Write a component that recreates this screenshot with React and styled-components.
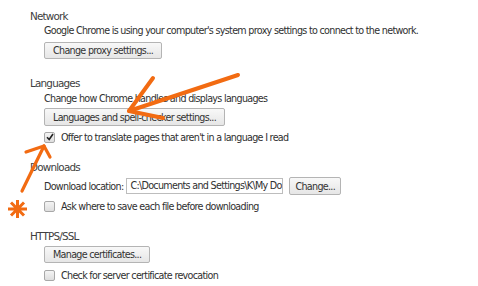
import styled, { createGlobalStyle } from "styled-components";

const GlobalStyle = createGlobalStyle`
  html, body {
    margin: 0;
    padding: 0;
    background: #fff;
  }
`;

const Page = styled.div`
  position: relative;
  width: 478px;
  height: 286px;
  overflow: hidden;
  padding: 8px 0 0 30px;
  box-sizing: border-box;
  font-family: "DejaVu Sans", "Liberation Sans", sans-serif;
  font-size: 9.6px;
  letter-spacing: -0.7px;
  color: #303030;
`;

const Section = styled.div`
  margin-bottom: ${(p) => p.$gap || 15}px;
`;

const Heading = styled.div`
  height: 16px;
  line-height: 16px;
  font-size: 10.4px;
  letter-spacing: -0.8px;
  color: #404040;
`;

const Body = styled.div`
  padding-left: 14px;
  display: flex;
  flex-direction: column;
  align-items: flex-start;
`;

const Text = styled.div`
  height: 14px;
  line-height: 14px;
  white-space: nowrap;
`;

const Button = styled.div`
  margin-top: ${(p) => p.$top || 0}px;
  height: ${(p) => p.$h || 17}px;
  padding: 0 ${(p) => p.$pad || 8}px;
  box-sizing: border-box;
  display: flex;
  align-items: center;
  border: 1px solid #b4b4b4;
  border-radius: 2px;
  background: linear-gradient(#f8f8f8, #e6e6e6);
  color: #333;
  white-space: nowrap;
`;

const Row = styled.div`
  margin-top: ${(p) => p.$top || 0}px;
  height: ${(p) => p.$h || 14}px;
  display: flex;
  align-items: center;
  gap: ${(p) => p.$gap || 6}px;
  white-space: nowrap;
`;

const Box = styled.span`
  width: 9px;
  height: 9px;
  border: 1px solid #a8a8a8;
  border-radius: 2px;
  background: linear-gradient(#f4f4f4, #dedede);
  display: flex;
  align-items: center;
  justify-content: center;
`;

const PathInput = styled.div`
  width: 157px;
  height: 16px;
  margin-right: 3px;
  box-sizing: border-box;
  border: 1px solid #bdbdbd;
  padding: 0 3px;
  line-height: 14px;
  overflow: hidden;
  white-space: nowrap;
  background: #fff;
`;

const Overlay = styled.svg`
  position: absolute;
  left: 0;
  top: 0;
  pointer-events: none;
`;

const Checkbox = ({ checked }) => (
  <Box>
    {checked && (
      <svg width="8" height="8" viewBox="0 0 8 8">
        <path d="M1 4.2 L3.2 6.5 L7 1" fill="none" stroke="#222" strokeWidth="1.6" />
      </svg>
    )}
  </Box>
);

const App = () => {
  return (
    <>
      <GlobalStyle />
      <Page>
        <Section $gap={16}>
          <Heading>Network</Heading>
          <Body>
            <Text>
              Google Chrome is using your computer's system proxy settings to connect to the network.
            </Text>
            <Button $top={4}>Change proxy settings...</Button>
          </Body>
        </Section>
        <Section>
          <Heading>Languages</Heading>
          <Body>
            <Text style={{ marginTop: 1 }}>Change how Chrome handles and displays languages</Text>
            <Button $top={2} $h={18}>Languages and spell-checker settings...</Button>
            <Row $top={4}>
              <Checkbox checked />
              Offer to translate pages that aren't in a language I read
            </Row>
          </Body>
        </Section>
        <Section>
          <Heading>Downloads</Heading>
          <Body>
            <Row $top={2} $h={18} $gap={3}>
              Download location:
              <PathInput>C:\Documents and Settings\K\My Documents\Downloads</PathInput>
              <Button $h={18} $pad={5}>Change...</Button>
            </Row>
            <Row $top={4}>
              <Checkbox />
              Ask where to save each file before downloading
            </Row>
          </Body>
        </Section>
        <Section>
          <Heading>HTTPS/SSL</Heading>
          <Body>
            <Button $top={2}>Manage certificates...</Button>
            <Row $top={5}>
              <Checkbox />
              Check for server certificate revocation
            </Row>
          </Body>
        </Section>
        <Overlay width="478" height="286" viewBox="0 0 478 286">
          <g stroke="#f26b12" strokeLinecap="round" fill="none">
            <path d="M238 75 L129 111" strokeWidth="4" />
            <path d="M153 78 L129 111 L163 118" strokeWidth="4" strokeLinejoin="round" />
            <path d="M22 191 L44 146" strokeWidth="3.2" />
            <path d="M26 152 L44 146 L50 157" strokeWidth="3.2" strokeLinejoin="round" />
            <path d="M17.5 200 V218 M8 209 H27 M11 202.5 L24 215.5 M24 202.5 L11 215.5" strokeWidth="3" strokeLinecap="butt" />
          </g>
        </Overlay>
      </Page>
    </>
  );
};

export default App;
